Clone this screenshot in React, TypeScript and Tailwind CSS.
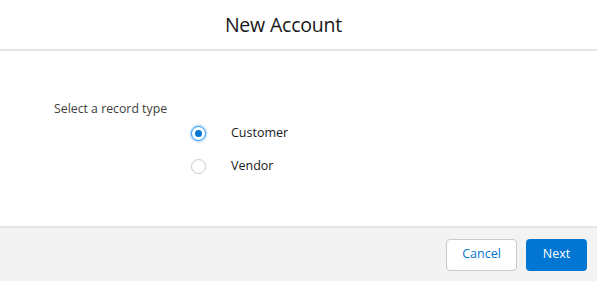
export default function App() {
  return (
    <div className="w-[597px] h-[281px] flex flex-col bg-white text-[#181818]" style={{ fontFamily: '"Open Sans", "Noto Sans", sans-serif' }}>
      <div className="h-[51px] flex items-center justify-center border-b-2 border-[#e5e5e5] shrink-0 pr-[30px]">
        <h2 className="text-[19.5px] text-[#181818] tracking-[-0.2px]">New Account</h2>
      </div>
      <div className="flex-1 pt-[50px] pl-[54px]">
        <div className="text-[12.3px] text-[#3e3e3c] leading-[16px]">Select a record type</div>
        <div className="flex flex-col pl-[137px] pt-[8px] gap-[17px]">
          <label className="flex items-center h-[16px]">
            <span className="w-[15px] h-[15px] rounded-full border border-[#1b96ff] flex items-center justify-center shadow-[0_0_2px_1px_rgba(1,118,211,0.35)]">
              <span className="w-[7px] h-[7px] rounded-full bg-[#0176d3]" />
            </span>
            <span className="ml-[25px] text-[12.5px] text-[#181818]">Customer</span>
          </label>
          <label className="flex items-center h-[16px]">
            <span className="w-[15px] h-[15px] rounded-full border border-[#c9c9c9] bg-white" />
            <span className="ml-[25px] text-[12.5px] text-[#181818]">Vendor</span>
          </label>
        </div>
      </div>
      <div className="h-[55px] shrink-0 bg-[#f3f3f3] border-t-2 border-[#e5e5e5] flex items-center justify-end pr-[10px] gap-[9px]">
        <button className="h-[32px] w-[71px] rounded-[4px] border border-[#c9c9c9] bg-white text-[#0176d3] text-[12.5px]">Cancel</button>
        <button className="h-[32px] w-[61px] rounded-[4px] bg-[#0176d3] text-white text-[12.5px]">Next</button>
      </div>
    </div>
  );
}
